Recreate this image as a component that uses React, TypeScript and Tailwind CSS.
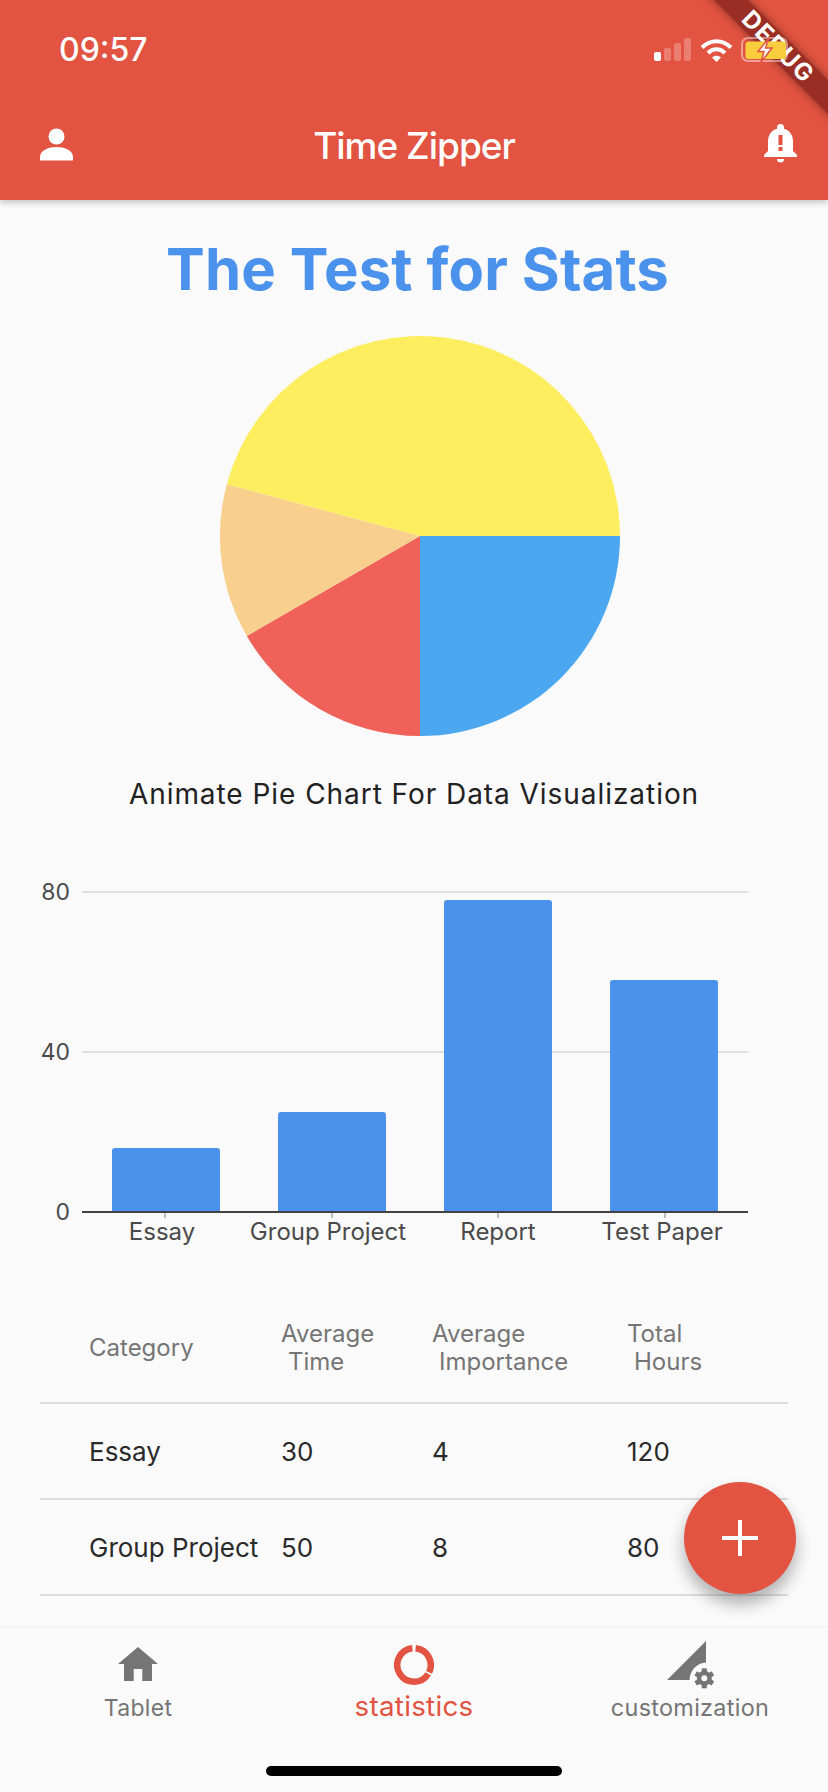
const FONT = "font-['Inter','Liberation_Sans',sans-serif]";

function polar(deg: number, r = 200, c = 200) {
  const a = (deg * Math.PI) / 180;
  return [c + r * Math.cos(a), c + r * Math.sin(a)];
}

function Slice({ from, to, fill }: { from: number; to: number; fill: string }) {
  const [x1, y1] = polar(from);
  const [x2, y2] = polar(to);
  const large = to - from > 180 ? 1 : 0;
  return <path d={`M200 200L${x1} ${y1}A200 200 0 ${large} 1 ${x2} ${y2}Z`} fill={fill} />;
}

function Signal() {
  return (
    <svg width="38" height="24" viewBox="0 0 38 24" fill="#fff">
      <rect x="0" y="14" width="7" height="9" rx="2" />
      <g opacity="0.25">
        <rect x="10" y="10" width="7" height="13" rx="2" />
        <rect x="20" y="5" width="7" height="18" rx="2" />
        <rect x="30" y="0" width="7" height="23" rx="2" />
      </g>
    </svg>
  );
}

function Wifi() {
  return (
    <svg width="33" height="24" viewBox="0 0 33 24" fill="none" stroke="#fff">
      <path d="M2 9.500C10.500 1 22.500 1 31 9.500" strokeWidth="4" />
      <path d="M8 15C13 10 20 10 25 15" strokeWidth="4" />
      <path d="M12 19.500C14.800 17 18.200 17 21 19.500L16.500 24Z" fill="#fff" stroke="none" />
    </svg>
  );
}

function Battery() {
  return (
    <svg width="48" height="26" viewBox="0 0 48 26">
      <rect x="1" y="1" width="45" height="23" rx="6" fill="none" stroke="#fff" strokeOpacity="0.45" strokeWidth="2" />
      <rect x="4.500" y="4.400" width="40.500" height="17.600" rx="3" fill="#f9cd3d" />
      <path d="M28 1 17 14.500h6L20 25 31 11h-6.500L28 1Z" fill="#fff" stroke="#e25341" strokeWidth="1.500" />
    </svg>
  );
}

function Person() {
  return (
    <svg width="33" height="33" viewBox="0 0 33 33" fill="#fff" className="ml-[9px]">
      <circle cx="16.500" cy="8.500" r="8" />
      <path d="M0 32.500v-3.500C0 22 9 19 16.500 19S33 22 33 29v3.500Z" />
    </svg>
  );
}

function Bell() {
  return (
    <svg width="33" height="40" viewBox="0 0 33 40" fill="#fff">
      <path d="M16.500 0a3.500 3.500 0 0 1 3.500 3.500v1.300C26 6.500 29 11.500 29 17.500V27l4 4v2H0v-2l4-4v-9.500C4 11.500 7 6.500 13 4.800V3.500A3.500 3.500 0 0 1 16.500 0Z" />
      <path d="M13 35h7a3.500 3.500 0 0 1-7 0Z" />
      <rect x="14.500" y="11" width="4" height="10" fill="#e25341" />
      <rect x="14.500" y="23" width="4" height="4" fill="#e25341" />
    </svg>
  );
}

function Home() {
  return (
    <svg width="40" height="34" viewBox="0 0 40 34" fill="#757575">
      <path d="M20 0 40 17h-6v17h-9.700V22h-8.600v12H6V17H0Z" />
    </svg>
  );
}

function arc(from: number, to: number) {
  const [x1, y1] = polar(from, 16.75, 20);
  const [x2, y2] = polar(to, 16.75, 20);
  const large = to - from > 180 ? 1 : 0;
  return `M${x1} ${y1}A16.750 16.750 0 ${large} 1 ${x2} ${y2}`;
}

function Donut() {
  return (
    <svg width="40" height="40" viewBox="0 0 40 40" fill="none" stroke="#e25341" strokeWidth="6.500">
      <path d={arc(-84.5, 26)} />
      <path d={arc(32, 264.5)} />
    </svg>
  );
}

function Customize() {
  return (
    <svg width="48" height="48" viewBox="0 0 48 48" className="ml-[2px]">
      <path d="M39 0V21.600C30 21.600 22.600 30 22.600 39H0Z" fill="#757575" />
      <g transform="translate(37.300 37.300)" fill="#757575">
        <circle r="7.500" />
        {[0, 60, 120, 180, 240, 300].map((d) => (
          <rect key={d} x="-2.500" y="-10" width="5" height="4" transform={`rotate(${d})`} />
        ))}
        <circle r="3" fill="#fafafa" />
      </g>
    </svg>
  );
}

function BarChart() {
  const bars = [
    { x: 112, top: 1148, tick: 165, label: "Essay", lx: 162 },
    { x: 278, top: 1112, tick: 332, label: "Group Project", lx: 328 },
    { x: 444, top: 900, tick: 498, label: "Report", lx: 498 },
    { x: 610, top: 980, tick: 665, label: "Test Paper", lx: 662 },
  ];
  const y = (v: number) => v - 870;
  return (
    <svg width="828" height="390" viewBox="0 0 828 390" className="block">
      {[892, 1052].map((g) => (
        <rect key={g} x="82" y={y(g) - 1} width="666" height="2" fill="#e0e0e0" />
      ))}
      {[
        ["80", 892],
        ["40", 1052],
        ["0", 1212],
      ].map(([t, g]) => (
        <text key={t} x="70" y={y(g as number) + 8} textAnchor="end" fontSize="23" fontFamily="Inter, sans-serif" fill="#4a4a4a">
          {t}
        </text>
      ))}
      {bars.map((b) => (
        <g key={b.label}>
          <path
            d={`M${b.x} ${y(1212)}V${y(b.top) + 3}a3 3 0 0 1 3-3H${b.x + 105}a3 3 0 0 1 3 3V${y(1212)}Z`}
            fill="#4a92ec"
          />
          <rect x={b.tick - 1} y={y(1212)} width="2" height="6" fill="#bdbdbd" />
          <text x={b.lx} y={y(1240)} textAnchor="middle" fontSize="24" fontFamily="Inter, sans-serif" fill="#4a4a4a">
            {b.label}
          </text>
        </g>
      ))}
      <rect x="82" y={y(1212) - 1} width="666" height="2" fill="#424242" />
    </svg>
  );
}

const cols = "grid grid-cols-[192px_151px_195px_1fr] pl-[49px]";

function Row({ cells }: { cells: string[] }) {
  return (
    <div className={`${cols} h-[96px] items-center border-b-2 border-[#dcdcdc] text-[26px] text-[#2a2a2a]`}>
      {cells.map((c) => (
        <span key={c}>{c}</span>
      ))}
    </div>
  );
}

function Head({ a, b }: { a: string; b: string }) {
  return (
    <span className="leading-[28px] whitespace-pre">
      {a}
      {"\n"}
      <span className="pl-[7px]">{b}</span>
    </span>
  );
}

function NavItem({
  icon,
  iconCls,
  label,
  cls,
}: {
  icon: React.ReactNode;
  iconCls: string;
  label: string;
  cls: string;
}) {
  return (
    <div className="flex flex-col items-center">
      <div className={`flex h-[61px] items-end ${iconCls}`}>{icon}</div>
      <span className={cls}>{label}</span>
    </div>
  );
}

export default function App() {
  return (
    <div className={`${FONT} relative flex h-[1792px] w-[828px] flex-col overflow-hidden bg-[#fafafa]`}>
      <header className="relative z-10 flex h-[200px] shrink-0 flex-col overflow-hidden bg-[#e25341] shadow-[0_3px_6px_rgba(0,0,0,0.2)]">
        <div className="absolute left-[658px] top-[35px] h-[24px] w-[240px] rotate-45 bg-[#9a2e24] shadow-[0_0_8px_rgba(0,0,0,0.4)]" />
        <div className="absolute left-[658px] top-[35px] flex h-[24px] w-[240px] rotate-45 items-center justify-center text-[24px] font-bold tracking-[1.500px] text-white">
          DEBUG
        </div>
        <div className="relative flex h-[98px] items-center justify-between pl-[59px] pr-[39px] pt-[2px]">
          <span className="text-[32px] font-medium text-white">09:57</span>
          <div className="flex items-center gap-[8px]">
            <Signal />
            <Wifi />
            <Battery />
          </div>
        </div>
        <div className="relative grid h-[102px] grid-cols-[1fr_auto_1fr] items-center pb-[10px] px-[31px]">
          <Person />
          <span className="pt-[3px] text-[37px] font-medium tracking-[-1px] text-white">Time Zipper</span>
          <div className="justify-self-end">
            <Bell />
          </div>
        </div>
      </header>

      <main className="flex flex-1 flex-col items-center">
        <h1 className="ml-[7px] mt-[35px] text-[58px] font-bold leading-[68px] tracking-[0.13px] text-[#4a92ec]">
          The Test for Stats
        </h1>
        <svg width="400" height="400" viewBox="0 0 400 400" className="ml-[12px] mt-[33px] shrink-0">
          <Slice from={0} to={90} fill="#4ba7ef" />
          <Slice from={90} to={150} fill="#ef6159" />
          <Slice from={150} to={195} fill="#f9cf8d" />
          <Slice from={195} to={360} fill="#fdee60" />
        </svg>
        <p className="mt-[40px] text-[28px] leading-[36px] tracking-[0.95px] text-[#212121]">
          Animate Pie Chart For Data Visualization
        </p>
        <div className="mt-[58px] w-full">
          <BarChart />
        </div>
        <div className="ml-[40px] mt-[24px] w-[748px] self-start">
          <div className={`${cols} h-[120px] items-center border-b-2 border-[#dcdcdc] pt-[9px] text-[24px] text-[#757575]`}>
            <span>Category</span>
            <Head a="Average" b="Time" />
            <Head a="Average" b="Importance" />
            <Head a="Total" b="Hours" />
          </div>
          <Row cells={["Essay", "30", "4", "120"]} />
          <Row cells={["Group Project", "50", "8", "80"]} />
        </div>
      </main>

      <nav className="relative grid h-[166px] shrink-0 grid-cols-3 items-start border-t-2 border-[#f4f4f4] bg-[#fafafa]">
        <NavItem icon={<Home />} iconCls="pb-[8px]" label="Tablet" cls="mt-[4px] text-[23px] leading-[30px] tracking-[0.3px] text-[#757575]" />
        <NavItem icon={<Donut />} iconCls="pb-[4px]" label="statistics" cls="mt-[2px] text-[27.700px] leading-[30px] tracking-[0.3px] text-[#e25341]" />
        <NavItem icon={<Customize />} iconCls="" label="customization" cls="mt-[4px] text-[23.400px] leading-[30px] tracking-[0.3px] text-[#757575]" />
        <div className="absolute bottom-[16px] left-[266px] h-[10px] w-[296px] rounded-full bg-black" />
      </nav>

      <button className="absolute left-[684px] top-[1482px] flex h-[112px] w-[112px] items-center justify-center rounded-full bg-[#e25341] shadow-[0_10px_16px_rgba(0,0,0,0.3)]">
        <svg width="36" height="36" viewBox="0 0 36 36" fill="#fff">
          <rect x="16" y="0" width="4" height="36" />
          <rect x="0" y="16" width="36" height="4" />
        </svg>
      </button>
    </div>
  );
}
